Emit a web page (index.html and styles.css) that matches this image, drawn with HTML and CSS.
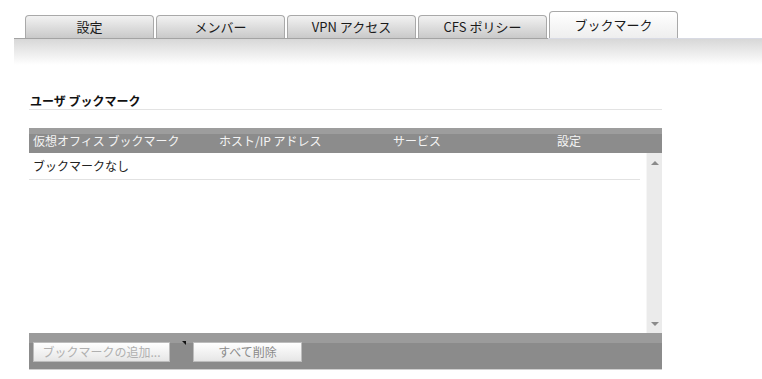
FILE: index.html
```html
<!DOCTYPE html>
<html>
  <head>
    <title>ユーザ ブックマーク</title>
    <link rel="stylesheet" href="styles.css">
  </head>
  <body>
    <div class="tabs">
      <div class="tab">設定</div>
      <div class="tab">メンバー</div>
      <div class="tab">VPN アクセス</div>
      <div class="tab">CFS ポリシー</div>
      <div class="tab active">ブックマーク</div>
    </div>
    <div class="tab-band"></div>

    <div class="content">
      <div class="section-title">ユーザ ブックマーク</div>

      <div class="grid">
        <div class="grid-head">
          <div class="col col-name">仮想オフィス ブックマーク</div>
          <div class="col col-host">ホスト/IP アドレス</div>
          <div class="col col-service">サービス</div>
          <div class="col col-config">設定</div>
        </div>
        <div class="grid-body">
          <div class="rows">
            <div class="row">ブックマークなし</div>
          </div>
          <div class="scrollbar">
            <span class="arrow up"></span>
            <span class="arrow down"></span>
          </div>
        </div>
        <div class="grid-foot">
          <button class="btn btn-add" disabled>ブックマークの追加...</button>
          <span class="marker"></span>
          <button class="btn btn-del">すべて削除</button>
        </div>
      </div>
    </div>
  </body>
</html>
```

FILE: styles.css
```css
body {
  margin: 0;
  background-color: #fff;
  font-family: "Noto Sans CJK JP", "DejaVu Sans", sans-serif;
  font-size: 12px;
  color: #222;
}

/* tabs */
.tabs {
  display: flex;
  align-items: flex-end;
  gap: 2px;
  padding: 12px 0 0 25px;
  height: 26px;
}

.tab {
  box-sizing: border-box;
  width: 129px;
  height: 23px;
  border: 1px solid #a9a9a9;
  border-bottom: none;
  border-radius: 4px 4px 0 0;
  background: linear-gradient(#f2f2f2, #c9c9c9);
  text-align: center;
  font-size: 13px;
  line-height: 22px;
  color: #1a1a1a;
}

.tab.active {
  height: 27px;
  line-height: 26px;
  background: linear-gradient(#ffffff, #eeeeee);
}

.tab-band {
  margin-left: 14px;
  height: 27px;
  background:
    linear-gradient(to right, #a3a3a3 0, #a3a3a3 534px, #d8dae3 534px) top / 100% 1px no-repeat,
    linear-gradient(#d6d6d6, #ffffff);
}

/* content */
.content {
  margin-left: 29px;
  width: 633px;
}

.section-title {
  margin-top: 28px;
  padding-left: 1px;
  line-height: 16px;
  font-size: 12px;
  font-weight: bold;
  color: #111;
  border-bottom: 1px solid #e3e3e3;
}

.grid {
  margin-top: 18px;
}

.grid-head {
  display: flex;
  height: 25px;
  background: linear-gradient(#9d9d9d 0, #9d9d9d 6px, #8c8c8c 6px);
  color: #f4f4f4;
  line-height: 26px;
}

.col {
  flex: none;
}

.col-name { width: 186px; padding-left: 4px; }
.col-host { width: 174px; }
.col-service { width: 164px; }
.col-config { width: 100px; }

.grid-body {
  display: flex;
  height: 180px;
}

.rows {
  flex: 1;
  padding-right: 6px;
}

.row {
  height: 26px;
  line-height: 25px;
  padding-left: 4px;
  border-bottom: 1px solid #e2e2e2;
  color: #222;
}

.scrollbar {
  width: 15px;
  border-left: 1px solid #f6f6f6;
  background-color: #ebebeb;
  display: flex;
  flex-direction: column;
  justify-content: space-between;
  align-items: center;
  padding: 8px 0 7px;
}

.arrow {
  width: 0;
  height: 0;
  border-left: 4px solid transparent;
  border-right: 4px solid transparent;
}

.arrow.up { border-bottom: 4px solid #8a8a8a; }
.arrow.down { border-top: 4px solid #8a8a8a; }

.grid-foot {
  display: flex;
  align-items: flex-start;
  box-sizing: border-box;
  height: 37px;
  padding: 9px 0 0 4px;
  background: linear-gradient(#9b9b9b 0, #9b9b9b 10px, #8b8b8b 10px);
  border-bottom: 1px solid #cfcfcf;
}

.btn {
  box-sizing: border-box;
  height: 20px;
  border: 1px solid #bdbdbd;
  background: linear-gradient(#ffffff, #e6e6e6);
  font-family: inherit;
  font-size: 12px;
  color: #9a9a9a;
  padding: 0;
  line-height: 18px;
}

.btn-add { width: 137px; color: #b0b0b0; }
.btn-del { width: 109px; color: #8a8a8a; }

.marker {
  flex: none;
  width: 0;
  height: 0;
  margin: -1px 7px 0 12px;
  border-top: 4px solid #111;
  border-left: 4px solid transparent;
}
```
